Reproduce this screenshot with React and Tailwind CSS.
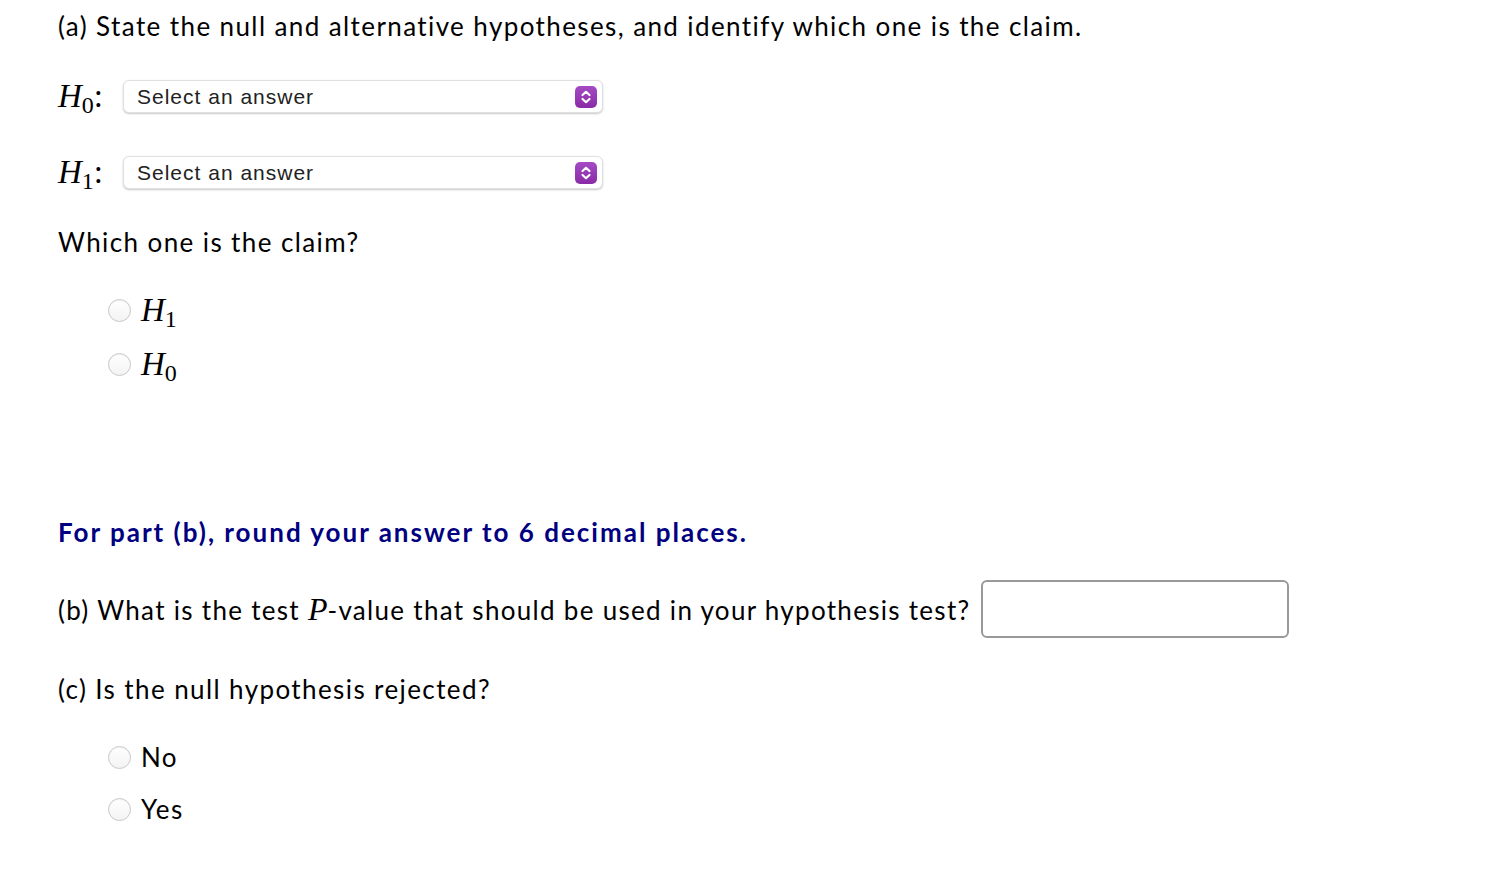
import React from "react";

const Select = () => (
  <div className="flex items-center justify-between w-[480px] h-[33px] rounded-md bg-white border border-[#e0e0e0] shadow-[0_1px_2px_rgba(0,0,0,0.22)] pl-[13px] pr-[5px]">
    <span className="text-[21px] tracking-[1px] text-[#222] font-['Liberation_Sans',sans-serif]">Select an answer</span>
    <span className="w-[22px] h-[22px] rounded-[5px] bg-gradient-to-b from-[#a44bc4] to-[#8a2aa6] flex items-center justify-center">
      <svg width="12" height="16" viewBox="0 0 12 16" fill="none" stroke="white" strokeWidth="2.2" strokeLinecap="round" strokeLinejoin="round">
        <path d="M2.5 6 L6 2.8 L9.5 6" />
        <path d="M2.5 10 L6 13.2 L9.5 10" />
      </svg>
    </span>
  </div>
);

const H = ({ sub }) => (
  <span className="font-['Liberation_Serif',serif] text-[33px] leading-none tracking-normal">
    <i>H</i>
    <span className="text-[24px] relative top-[6px]">{sub}</span>
  </span>
);

const Radio = ({ children }) => (
  <div className="flex items-center gap-[10px] h-[32px]">
    <span className="w-[23px] h-[23px] rounded-full border border-[#c8c8c8] bg-gradient-to-b from-white to-[#f3f3f3] shadow-[inset_0_1px_1px_rgba(0,0,0,0.05)]" />
    {children}
  </div>
);

export default function App() {
  return (
    <div className="bg-white w-[1506px] h-[872px] pl-[58px] pt-[10px] text-black font-['Lato',sans-serif] text-[26px] tracking-[1.4px]">
      <p className="h-[32px] leading-[32px]">
        (a) State the null and alternative hypotheses, and identify which one is the claim.
      </p>
      <div className="flex items-center gap-[14px] mt-[38px] h-[33px]">
        <span className="w-[51px] font-['Liberation_Serif',serif] text-[33px] leading-none tracking-normal"><H sub="0" />:</span>
        <Select />
      </div>
      <div className="flex items-center gap-[14px] mt-[43px] h-[33px]">
        <span className="w-[51px] font-['Liberation_Serif',serif] text-[33px] leading-none tracking-normal"><H sub="1" />:</span>
        <Select />
      </div>
      <p className="mt-[37px] h-[32px] leading-[32px]">Which one is the claim?</p>
      <div className="ml-[50px] mt-[36px] flex flex-col gap-[22px]">
        <Radio><H sub="1" /></Radio>
        <Radio><H sub="0" /></Radio>
      </div>
      <p className="mt-[136px] h-[32px] leading-[32px] font-bold tracking-[2px] text-[#000080]">
        For part (b), round your answer to 6 decimal places.
      </p>
      <div className="flex items-center mt-[31px] h-[59px]">
        <span className="tracking-[1.3px]">
          (b) What is the test <i className="font-['Liberation_Serif',serif] text-[32px] tracking-normal">P</i>-value that should be used in your hypothesis test?
        </span>
        <div className="ml-[10px] w-[308px] h-[58px] rounded-[6px] border-2 border-[#999]" />
      </div>
      <p className="mt-[35px] h-[32px] leading-[32px]">(c) Is the null hypothesis rejected?</p>
      <div className="ml-[50px] mt-[36px] flex flex-col gap-[20px]">
        <Radio><span>No</span></Radio>
        <Radio><span>Yes</span></Radio>
      </div>
    </div>
  );
}
